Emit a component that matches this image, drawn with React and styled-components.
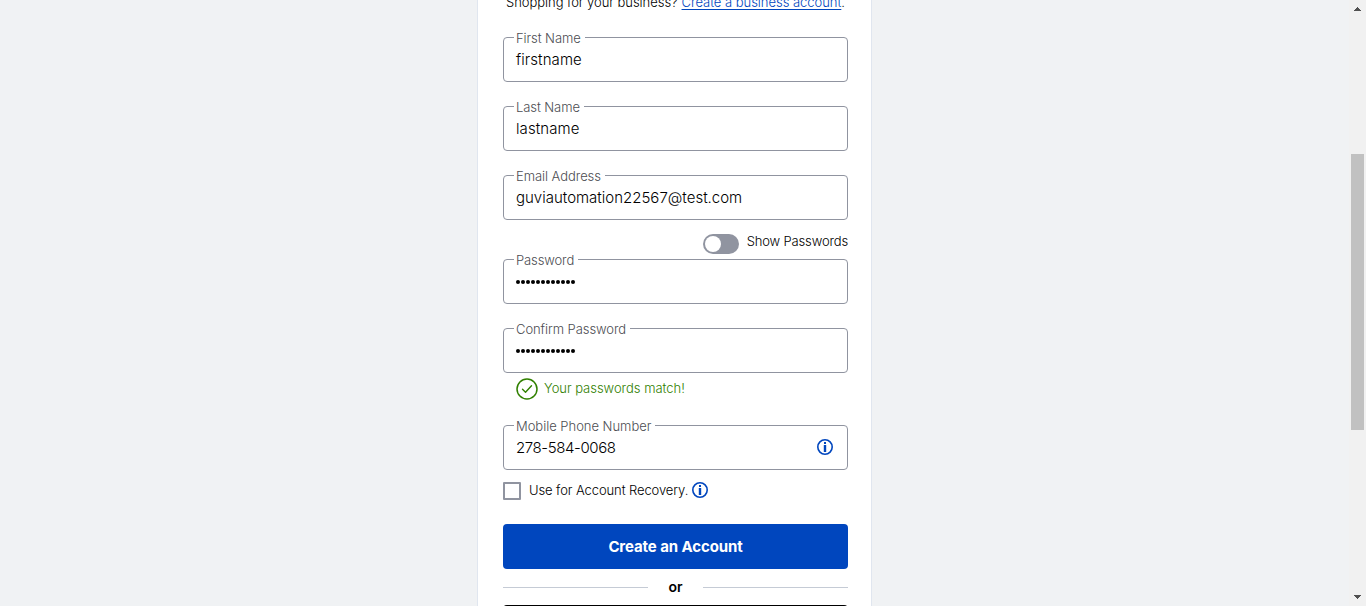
import React from "react";
import styled, { createGlobalStyle } from "styled-components";

const GlobalStyle = createGlobalStyle`
  * { box-sizing: border-box; }
  html, body { margin: 0; height: 606px; overflow: hidden; background: #f0f2f4; }
  body { font-family: Inter, "Liberation Sans", sans-serif; font-size: 13px; font-weight: 350; line-height: 16px; color: #000; }
`;

const Page = styled.div`
  display: flex;
  height: 606px;
  overflow: hidden;
`;

const Main = styled.main`
  flex: 1;
  display: flex;
  justify-content: center;
`;

const Card = styled.section`
  width: 395px;
  height: 606px;
  overflow: hidden;
  padding: 0 23px 0 25px;
  background: #fff;
  border: solid #e0e6ef;
  border-width: 0 1px;
`;

const Text = styled.span`
  display: inline-block;
  white-space: nowrap;
  letter-spacing: ${(p) => p.$spacing || 0}px;
`;

const BusinessLine = styled.p`
  display: flex;
  height: 16px;
  margin: -6px 0 27px;
  padding-left: 3px;
  gap: 4px;
`;

const Link = styled.a`
  color: #0046be;
  text-decoration: underline;
  text-underline-offset: 2px;
  white-space: nowrap;
  letter-spacing: ${(p) => p.$spacing || 0}px;
`;

const Field = styled.div`
  position: relative;
  display: flex;
  align-items: center;
  justify-content: space-between;
  height: 45px;
  margin-bottom: ${(p) => p.$gap ?? 24}px;
  padding: 0 14px 1px 12px;
  border: 1px solid #9094a0;
  border-radius: 4px;
`;

const Label = styled.label`
  position: absolute;
  top: -8px;
  left: 10px;
  height: 16px;
  padding: 0 4px 0 2px;
  background: #fff;
  color: #4c4d52;
  white-space: nowrap;
  letter-spacing: ${(p) => p.$spacing || 0}px;
`;

const Value = styled.span`
  font-size: 15px;
  line-height: 20px;
  padding-top: 1px;
  white-space: nowrap;
  letter-spacing: ${(p) => p.$spacing || 0}px;
`;

const Dots = styled.span`
  display: flex;
  gap: 1px;
  padding-top: 2px;
`;

const Dot = styled.i`
  width: 4px;
  height: 4px;
  border-radius: 50%;
  background: #000;
`;

const ToggleRow = styled.div`
  display: flex;
  justify-content: flex-end;
  height: 26px;
  gap: 8px;
`;

const Toggle = styled.span`
  width: 36px;
  height: 20px;
  margin-top: 1px;
  padding: 2px;
  border-radius: 10px;
  background: #9094a0;
`;

const Knob = styled.span`
  display: block;
  width: 16px;
  height: 16px;
  border-radius: 50%;
  background: #fff;
`;

const MatchRow = styled.div`
  display: flex;
  gap: 6px;
  height: 22px;
  margin-bottom: 25px;
  padding-left: 13px;
  line-height: 20px;
  color: #318000;
`;

const Recovery = styled.div`
  display: flex;
  height: 18px;
  margin-bottom: 24px;
`;

const Checkbox = styled.span`
  width: 18px;
  height: 18px;
  margin-right: 8px;
  border: 2px solid #9094a0;
  border-radius: 1px;
`;

const RecoveryText = styled(Text)`
  width: 163px;
`;

const Icon = styled.svg`
  display: block;
  flex: none;
`;

const Button = styled.button`
  display: block;
  width: 100%;
  height: 45px;
  padding: 1px 0 0;
  border: 0;
  border-radius: 4px;
  background: #0046be;
  color: #fff;
  font: 700 15px/20px Inter, sans-serif;
  letter-spacing: ${(p) => p.$spacing || 0}px;
`;

const Divider = styled.div`
  display: flex;
  align-items: center;
  height: 36px;
  font-size: 14px;
  font-weight: 600;
`;

const Rule = styled.span`
  width: 145px;
  height: 1px;
  background: #c5cbd5;
`;

const Or = styled.span`
  flex: 1;
  text-align: center;
`;

const DarkButton = styled.div`
  height: 45px;
  border-radius: 4px;
  background: #000;
`;

const Scrollbar = styled.aside`
  display: flex;
  flex-direction: column;
  align-items: center;
  width: 17px;
  height: 606px;
  padding: 7px 0 7px;
  background: #f1f1f1;
`;

const Thumb = styled.div`
  width: 13px;
  height: 276px;
  margin: 143px 0 auto;
  background: #c1c1c1;
`;

const Arrow = ({ down }) => (
  <Icon width="7" height="4" viewBox="0 0 7 4" shapeRendering="crispEdges">
    <path d={down ? "M0 0h7v1H6v1H5v1H4v1H3V3H2V2H1V1H0z" : "M3 0h1v1h1v1h1v1h1v1H0V3h1V2h1V1h1z"} fill="#505050" />
  </Icon>
);

const InfoIcon = () => (
  <Icon width="16" height="16" viewBox="0 0 16 16" fill="none">
    <circle cx="8" cy="8" r="7.2" stroke="#0046be" strokeWidth="1.6" />
    <path d="M7 3h2v2H7zM6.8 6h2.4v7H6.8z" fill="#0046be" />
  </Icon>
);

const CheckIcon = () => (
  <Icon width="22" height="22" viewBox="0 0 22 22" fill="none" stroke="#318000">
    <circle cx="11" cy="11" r="10" strokeWidth="1.5" />
    <path d="m6.5 11.3 3 3 6-6.5" strokeWidth="1.4" strokeLinecap="round" strokeLinejoin="round" />
  </Icon>
);

const PasswordDots = () => (
  <Dots>
    {Array.from({ length: 12 }, (_, i) => <Dot key={i} />)}
  </Dots>
);

export default function App() {
  return (
    <>
      <GlobalStyle />
      <Page>
        <Main>
          <Card>
            <BusinessLine>
              <Text $spacing={-0.04}>Shopping for your business?</Text>
              <span><Link $spacing={-0.03}>Create a business account</Link>.</span>
            </BusinessLine>
            <Field><Label $spacing={-0.08}>First Name</Label><Value $spacing={0.08}>firstname</Value></Field>
            <Field><Label $spacing={-0.08}>Last Name</Label><Value $spacing={0.08}>lastname</Value></Field>
            <Field $gap={13}><Label $spacing={-0.06}>Email Address</Label><Value>guviautomation22567@test.com</Value></Field>
            <ToggleRow>
              <Toggle><Knob /></Toggle>
              <Text $spacing={-0.15}>Show Passwords</Text>
            </ToggleRow>
            <Field><Label $spacing={-0.12}>Password</Label><PasswordDots /></Field>
            <Field $gap={5}><Label $spacing={-0.07}>Confirm Password</Label><PasswordDots /></Field>
            <MatchRow><CheckIcon /><Text $spacing={-0.03}>Your passwords match!</Text></MatchRow>
            <Field $gap={12}><Label $spacing={-0.02}>Mobile Phone Number</Label><Value $spacing={-0.4}>278-584-0068</Value><InfoIcon /></Field>
            <Recovery><Checkbox /><RecoveryText $spacing={-0.09}>Use for Account Recovery.</RecoveryText><InfoIcon /></Recovery>
            <Button $spacing={-0.1}>Create an Account</Button>
            <Divider><Rule /><Or>or</Or><Rule /></Divider>
            <DarkButton />
          </Card>
        </Main>
        <Scrollbar><Arrow /><Thumb /><Arrow down /></Scrollbar>
      </Page>
    </>
  );
}
